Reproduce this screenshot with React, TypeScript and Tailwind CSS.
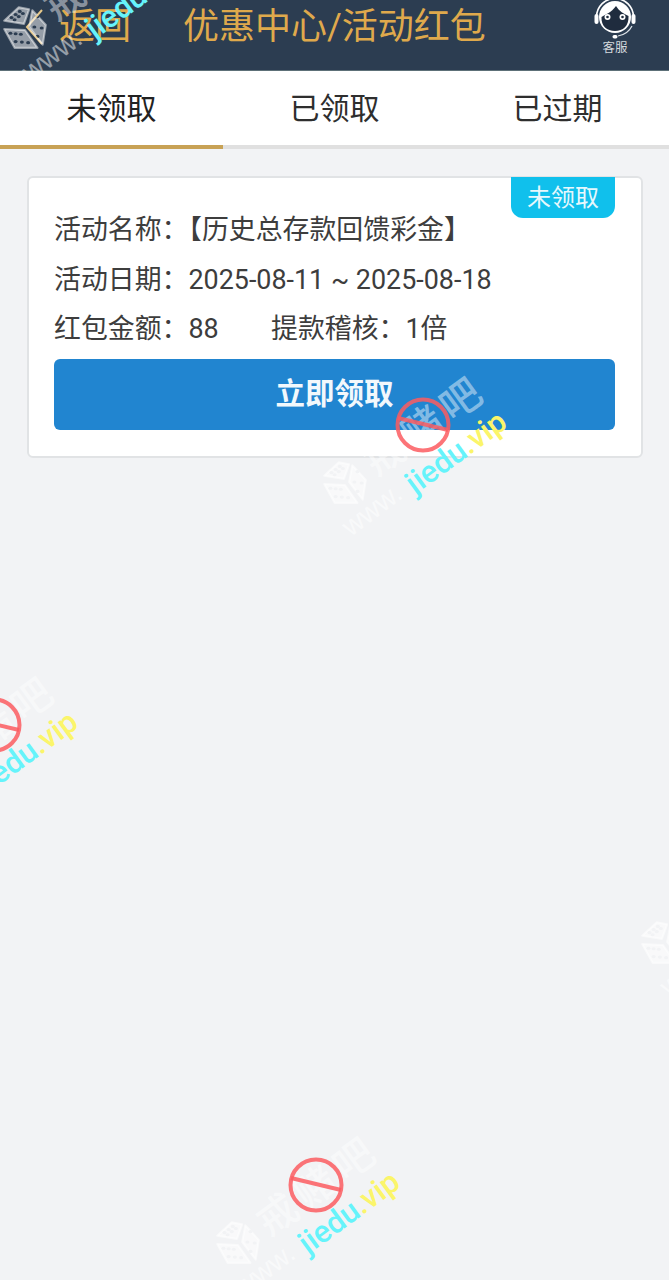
const font = { fontFamily: '"Roboto","Noto Sans CJK SC",sans-serif' };

const diceHoles: [number, number][] = [
  [11, 15], [15, 12], [19, 9], [14, 17], [18, 14], [22, 11],
  [10, 30], [15, 30.5], [20, 31], [15, 38], [21, 38.5], [27, 39],
  [36, 14], [33, 24], [40, 25], [36, 33],
];

function Dice({ className, id }: { className: string; id: string }) {
  return (
    <svg viewBox="0 0 48 48" className={className}>
      <mask id={id}>
        <rect width="48" height="48" fill="#fff" />
        {diceHoles.map(([cx, cy], i) => (
          <ellipse key={i} cx={cx} cy={cy} rx="1.9" ry="1.5" fill="#000" />
        ))}
      </mask>
      <g mask={`url(#${id})`} fill="currentColor" stroke="currentColor" strokeWidth="2" strokeLinejoin="round">
        <path d="M4 18 L18 5 L28 7 L23 21 Z" />
        <path d="M4 26 L24 27 L36 44 L14 44 Z" />
        <path d="M31 8 L44 22 L41 41 L28 24 Z" />
      </g>
    </svg>
  );
}

function Watermark({ x, y, id, tone = "text-white/50" }: { x: number; y: number; id: string; tone?: string }) {
  return (
    <div className="pointer-events-none absolute h-0 w-0" style={{ left: x, top: y }}>
      <div className={`absolute left-[-103px] top-[32px] ${tone}`}>
        <Dice id={id} className="h-[50px] w-[50px]" />
      </div>
      <div
        className="absolute left-[3px] top-[1px] -translate-x-1/2 -translate-y-1/2 rotate-[-36deg] whitespace-nowrap text-[40px] font-medium leading-none tracking-[7px] text-white/45"
        style={font}
      >
        戒赌吧
      </div>
      <div
        className="absolute left-[-51px] top-[85px] -translate-x-1/2 -translate-y-1/2 rotate-[-37deg] whitespace-nowrap text-[28px] leading-none text-white/50"
        style={{ fontFamily: '"Liberation Sans",sans-serif' }}
      >
        www.
      </div>
      <div
        className="absolute left-[33px] top-[27px] -translate-x-1/2 -translate-y-1/2 rotate-[-36deg] whitespace-nowrap text-[31px] font-medium leading-none"
        style={{ fontFamily: '"Roboto",sans-serif' }}
      >
        <span className="text-[#66f3fb]">jiedu</span>
        <span className="text-[#fbf56a]">.vip</span>
      </div>
      <svg viewBox="0 0 56 56" className="absolute left-[-28px] top-[-28px] h-[56px] w-[56px]">
        <circle cx="28" cy="28" r="25.5" fill="none" stroke="#fb5c60" strokeOpacity="0.85" strokeWidth="4" />
        <path d="M3 21 L53 33" stroke="#fb5c60" strokeOpacity="0.85" strokeWidth="4" />
      </svg>
    </div>
  );
}

function SupportIcon() {
  return (
    <svg viewBox="0 0 44 40" className="h-[40px] w-[44px]">
      <path d="M3.5 17 A18.5 18.5 0 0 1 40.5 17" fill="none" stroke="#fff" strokeWidth="1.6" />
      <path d="M39 26 C36 32 31 35 25 36" fill="none" stroke="#dfe4e8" strokeWidth="1.2" />
      <circle cx="22" cy="17" r="16" fill="#fff" />
      <path d="M8.5 17 C13 14 18 13 23 6 C26 11 31 14 35.5 16 C36 26 30 31 22 31 C14 31 8 26 8.5 17 Z" fill="#1f2c3e" />
      <circle cx="14.5" cy="17" r="3" fill="#fff" />
      <circle cx="29.5" cy="17" r="3" fill="#fff" />
      <circle cx="14.5" cy="17" r="1.3" fill="#1f2c3e" />
      <circle cx="29.5" cy="17" r="1.3" fill="#1f2c3e" />
      <rect x="1.5" y="14" width="4" height="10" rx="2" fill="#fff" />
      <rect x="38.5" y="14" width="4" height="10" rx="2" fill="#fff" />
      <rect x="19.5" y="35" width="5" height="3.5" rx="1.7" fill="#fff" />
    </svg>
  );
}

export default function App() {
  const tabs = ["未领取", "已领取", "已过期"];
  return (
    <div className="relative h-[1280px] w-full overflow-hidden bg-[#f2f3f5]" style={font}>
      <header className="flex h-[71px] items-start border-b border-[#5d7078] bg-[#2c3d51]">
        <div className="flex w-[183px] items-center pl-[25px] pt-[9px]">
          <svg viewBox="0 0 18 36" className="h-[36px] w-[18px]">
            <path d="M17 1 L2 18 L17 35" fill="none" stroke="#e6c88a" strokeWidth="2" />
          </svg>
          <span className="ml-[16px] text-[36px] leading-none text-[#dfa94c]">返回</span>
        </div>
        <h1 className="pt-[9px] text-[36px] font-normal leading-none text-[#dfa94c]">优惠中心/活动红包</h1>
        <div className="ml-auto mr-[32px] flex flex-col items-center">
          <SupportIcon />
          <span className="pt-[1px] text-[12.5px] leading-[14px] text-[#d5dade]">客服</span>
        </div>
      </header>

      <nav className="grid h-[78px] grid-cols-3 bg-white">
        {tabs.map((t, i) => (
          <div
            key={t}
            className={`flex items-center justify-center border-b-4 pt-[2px] text-[30px] leading-none ${
              i === 0 ? "border-[#c8a255] text-[#222222]" : "border-[#e0e0e0] text-[#2e2e2e]"
            }`}
          >
            {t}
          </div>
        ))}
      </nav>

      <main className="px-[27px] pt-[27px]">
        <section className="relative h-[282px] w-[616px] rounded-[6px] border-2 border-[#e1e3e5] bg-white pl-[25px] pr-[26px] pt-[33px]">
          <div className="absolute right-[26px] top-[-1px] flex h-[41px] w-[104px] items-center justify-center rounded-b-[12px] bg-[#10c0ec] text-[24px] leading-none text-[#e6f8fd]">
            未领取
          </div>
          <div className="flex flex-col text-[26.9px] leading-[38px] text-[#3d3d3d]">
            <p className="h-[50px]">活动名称：【历史总存款回馈彩金】</p>
            <p className="h-[49px]">活动日期：2025-08-11 ~ 2025-08-18</p>
            <p className="flex h-[42px]">
              <span className="w-[217px]">红包金额：88</span>
              <span>提款稽核：1倍</span>
            </p>
          </div>
          <button className="mt-[7px] flex h-[71px] w-full items-center justify-center rounded-[6px] bg-[#2185d0] text-[29.5px] font-bold leading-none text-[#f2f8fc]">
            立即领取
          </button>
        </section>
      </main>

      <Watermark id="d1" x={103} y={-30} />
      <Watermark id="d2" x={423} y={425} />
      <Watermark id="d3" x={-6} y={725} />
      <Watermark id="d4" x={316} y={1185} />
      <Watermark id="d5" x={741} y={885} />
    </div>
  );
}
